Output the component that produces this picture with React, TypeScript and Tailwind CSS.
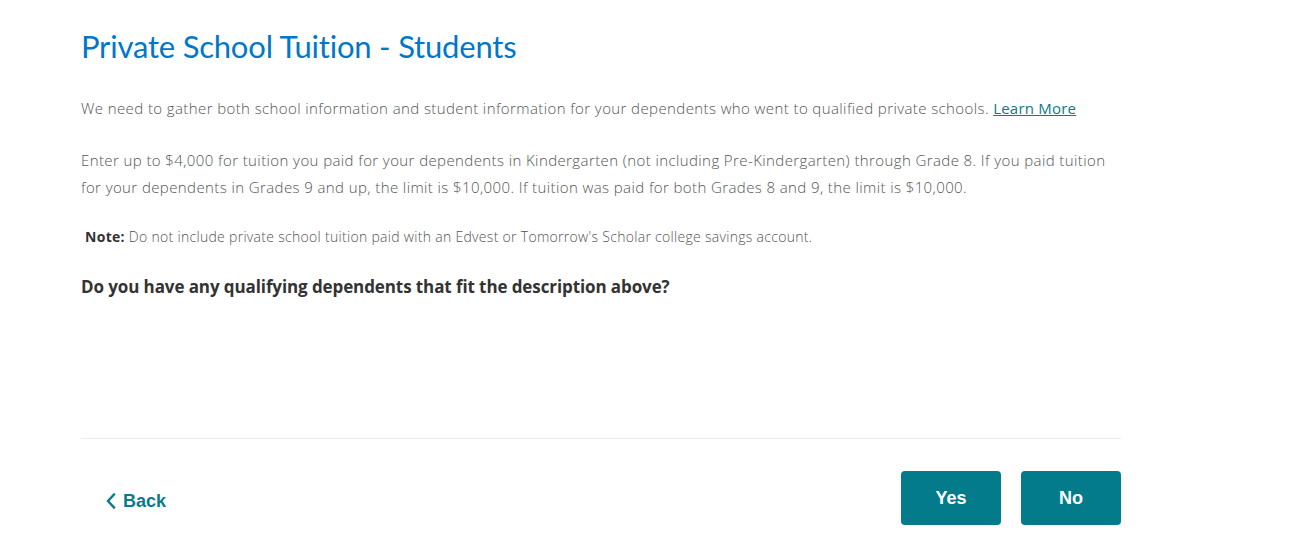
export default function App() {
  return (
    <div className="min-h-screen bg-white font-['Open_Sans',sans-serif]">
      <div className="w-[1040px] ml-[81px] pt-[26px]">
        <h1 className="text-[31px] leading-[40px] tracking-[-0.2px] text-[#0077c8] font-normal font-['Lato',sans-serif]">
          Private School Tuition - Students
        </h1>

        <p className="mt-[31px] text-[15px] leading-[22px] tracking-[0.4px] font-light text-[#555]">
          We need to gather both school information and student information for your dependents who went to qualified private schools.{" "}
          <a href="#" className="font-normal tracking-[0.2px] text-[#0b7a8a] underline">
            Learn More
          </a>
        </p>

        <p className="mt-[28px] text-[15px] leading-[27px] tracking-[0.4px] font-light text-[#555]">
          Enter up to $4,000 for tuition you paid for your dependents in Kindergarten (not including Pre-Kindergarten) through Grade 8. If you paid tuition for your dependents in Grades 9 and up, the limit is $10,000. If tuition was paid for both Grades 8 and 9, the limit is $10,000.
        </p>

        <p className="mt-[26px] pl-[4px] text-[14px] leading-[20px] tracking-[0.3px] font-light text-[#555]">
          <span className="font-bold text-[#333]">Note:</span> Do not include private school tuition paid with an Edvest or Tomorrow's Scholar college savings account.
        </p>

        <h2 className="mt-[29px] text-[17px] leading-[22px] tracking-[-0.1px] font-bold text-[#333]">
          Do you have any qualifying dependents that fit the description above?
        </h2>

        <div className="mt-[140px] border-t border-[#ebebeb]" />

        <div className="flex items-center justify-between mt-[32px]">
          <a href="#" className="ml-[25px] mt-[6px] flex items-center gap-[7px] text-[18px] font-bold text-[#0b7a8a] font-['Liberation_Sans',sans-serif]">
            <svg width="10" height="16" viewBox="0 0 10 16" fill="none" stroke="currentColor" strokeWidth="2.4" strokeLinecap="square">
              <path d="M8 1.5 2 8l6 6.5" />
            </svg>
            Back
          </a>
          <div className="flex gap-[20px]">
            <button className="w-[100px] h-[54px] rounded-[4px] bg-[#037b8a] text-white text-[18px] font-bold font-['Liberation_Sans',sans-serif]">
              Yes
            </button>
            <button className="w-[100px] h-[54px] rounded-[4px] bg-[#037b8a] text-white text-[18px] font-bold font-['Liberation_Sans',sans-serif]">
              No
            </button>
          </div>
        </div>
      </div>
    </div>
  );
}
